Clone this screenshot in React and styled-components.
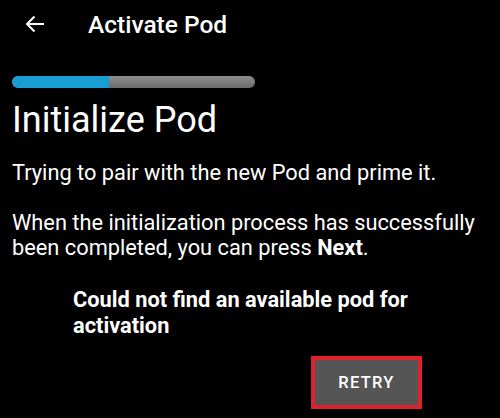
import React from 'react';
import styled, { createGlobalStyle } from 'styled-components';

const GlobalStyle = createGlobalStyle`
  html, body {
    margin: 0;
    padding: 0;
    background: #000;
  }
  body {
    font-family: Roboto, "Noto Sans", Arial, sans-serif;
    color: #fff;
  }
`;

const App = () => {
    const progress = 40;

    return (
        <Screen>
            <GlobalStyle />
            <Toolbar>
                <BackButton aria-label="Back">
                    <svg width="20" height="20" viewBox="0 0 20 20" fill="none">
                        <path d="M19 10H2M9.5 2.5L2 10l7.5 7.5" stroke="#fff" strokeWidth="2" />
                    </svg>
                </BackButton>
                <Title>Activate Pod</Title>
            </Toolbar>

            <Content>
                <ProgressTrack>
                    <ProgressFill style={{ width: `${progress}%` }} />
                </ProgressTrack>

                <Heading>Initialize Pod</Heading>

                <Paragraph>Trying to pair with the new Pod and prime it.</Paragraph>
                <Paragraph>
                    When the initialization process has successfully been completed, you can press <b>Next</b>.
                </Paragraph>

                <ErrorText>Could not find an available pod for activation</ErrorText>

                <Actions>
                    <RetryButton>Retry</RetryButton>
                </Actions>
            </Content>
        </Screen>
    );
};

const Screen = styled.div`
  width: 500px;
  height: 418px;
  background: #000;
  overflow: hidden;
`;

const Toolbar = styled.header`
  display: flex;
  align-items: center;
  height: 48px;
  padding-left: 25px;
`;

const BackButton = styled.button`
  display: flex;
  align-items: center;
  justify-content: center;
  width: 20px;
  height: 20px;
  padding: 0;
  border: none;
  background: none;
  cursor: pointer;
`;

const Title = styled.h1`
  margin: 0 0 0 43px;
  font-size: 24.5px;
  font-weight: 500;
  color: #fff;
`;

const Content = styled.main`
  padding: 28px 12px 0 12px;
`;

const ProgressTrack = styled.div`
  width: 243px;
  height: 12px;
  border-radius: 6px;
  background: linear-gradient(#8e8e8e, #6c6c6c);
  overflow: hidden;
`;

const ProgressFill = styled.div`
  height: 100%;
  background: #199ed4;
  border-radius: 6px 0 0 6px;
`;

const Heading = styled.h2`
  margin: 10px 0 18px 0;
  font-size: 36px;
  font-weight: 400;
  line-height: 44px;
`;

const Paragraph = styled.p`
  margin: 0 0 24px 0;
  font-size: 21.8px;
  line-height: 25.6px;
  color: #fff;

  b {
    font-weight: 700;
  }
`;

const ErrorText = styled.p`
  margin: 0 0 0 61px;
  width: 360px;
  font-size: 21.8px;
  font-weight: 700;
  line-height: 26px;
  padding-top: 2px;
`;

const Actions = styled.div`
  display: flex;
  justify-content: flex-end;
  padding-right: 66px;
  margin-top: 17px;
`;

const RetryButton = styled.button`
  width: 111px;
  height: 53px;
  border: 4px solid #e0202a;
  background: #555;
  color: #fff;
  font-family: Roboto, Arial, sans-serif;
  font-size: 16.5px;
  font-weight: 500;
  letter-spacing: 1.3px;
  text-transform: uppercase;
  cursor: pointer;
`;

export default App;
